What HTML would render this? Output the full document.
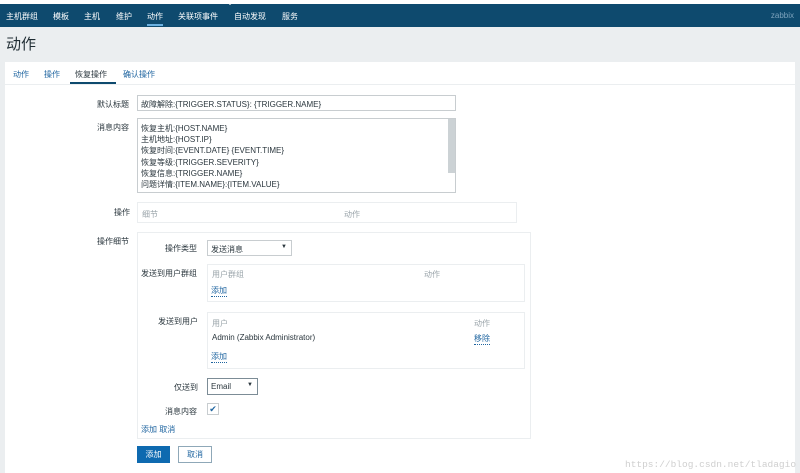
<!DOCTYPE html>
<html><head><meta charset="utf-8"><style>
*{margin:0;padding:0;box-sizing:border-box}
body{width:800px;height:473px;overflow:hidden;background:#ebeef0;font-family:"Liberation Sans","Noto Sans CJK SC",sans-serif;font-size:8px;color:#2a363d;position:relative}
.a{position:absolute}
.nav{left:0;top:4px;width:800px;height:23px;background:#0e4a6e}
.nav span{position:absolute;top:7px;color:#fff;font-size:8px}
.lnk{color:#1f65a0}
.inp{border:1px solid #c8cdd0;background:#fff}
.gl{color:#9aa4aa}
.box{border:1px solid #ebeef0;background:#fff}
</style></head><body>
<div class="a" style="left:0;top:0;width:800px;height:4px;background:#fff"></div>
<div class="a" style="left:224px;top:0;width:0;height:0;border-left:6px solid transparent;border-right:6px solid transparent;border-top:5px solid #fff;z-index:2"></div>
<div class="a nav">
<span style="left:6px">主机群组</span><span style="left:53px">模板</span><span style="left:84px">主机</span><span style="left:116px">维护</span><span style="left:147px">动作</span><span style="left:178px">关联项事件</span><span style="left:234px">自动发现</span><span style="left:282px">服务</span>
<span style="right:6px;color:#7da3bd">zabbix</span>
<div class="a" style="left:147px;top:20px;width:16px;height:2px;background:#6ab0e0"></div>
</div>
<div class="a" style="left:6px;top:33px;font-size:15px;color:#1f2c33">动作</div>
<div class="a" style="left:5px;top:62px;width:790px;height:411px;background:#fff"></div>
<div class="a" style="left:5px;top:84px;width:790px;height:1px;background:#ebeef0"></div>
<div class="a lnk" style="left:13px;top:69px">动作</div>
<div class="a lnk" style="left:44px;top:69px">操作</div>
<div class="a" style="left:75px;top:69px">恢复操作</div>
<div class="a" style="left:70px;top:82px;width:46px;height:2px;background:#0e4a6e"></div>
<div class="a lnk" style="left:123px;top:69px">确认操作</div>

<div class="a" style="left:97px;top:99px">默认标题</div>
<div class="a inp" style="left:137px;top:95px;width:319px;height:16px;padding:3px 3px">故障解除:{TRIGGER.STATUS}: {TRIGGER.NAME}</div>
<div class="a" style="left:97px;top:122px">消息内容</div>
<div class="a inp" style="left:137px;top:118px;width:319px;height:75px;padding:4px 3px;line-height:11.2px">恢复主机:{HOST.NAME}<br>主机地址:{HOST.IP}<br>恢复时间:{EVENT.DATE} {EVENT.TIME}<br>恢复等级:{TRIGGER.SEVERITY}<br>恢复信息:{TRIGGER.NAME}<br>问题详情:{ITEM.NAME}:{ITEM.VALUE}</div>
<div class="a" style="left:448px;top:119px;width:7px;height:54px;background:#ccd2d5"></div>

<div class="a" style="left:114px;top:207px">操作</div>
<div class="a box" style="left:137px;top:202px;width:380px;height:21px"></div>
<div class="a gl" style="left:142px;top:209px">细节</div>
<div class="a gl" style="left:344px;top:209px">动作</div>

<div class="a" style="left:97px;top:236px">操作细节</div>
<div class="a box" style="left:137px;top:232px;width:394px;height:207px"></div>
<div class="a" style="left:165px;top:243px">操作类型</div>
<div class="a inp" style="left:207px;top:240px;width:85px;height:16px;padding:3px 3px">发送消息<span style="position:absolute;right:4px;top:3px;font-size:6px">▼</span></div>
<div class="a" style="left:141px;top:268px">发送到用户群组</div>
<div class="a box" style="left:207px;top:264px;width:318px;height:38px"></div>
<div class="a gl" style="left:212px;top:269px">用户群组</div>
<div class="a gl" style="left:424px;top:269px">动作</div>
<div class="a lnk" style="left:211px;top:285px;border-bottom:1px dotted #1f65a0">添加</div>
<div class="a" style="left:158px;top:316px">发送到用户</div>
<div class="a box" style="left:207px;top:312px;width:318px;height:57px"></div>
<div class="a gl" style="left:212px;top:318px">用户</div>
<div class="a gl" style="left:474px;top:318px">动作</div>
<div class="a" style="left:212px;top:333px">Admin (Zabbix Administrator)</div>
<div class="a lnk" style="left:474px;top:333px;border-bottom:1px dotted #1f65a0">移除</div>
<div class="a lnk" style="left:211px;top:351px;border-bottom:1px dotted #1f65a0">添加</div>
<div class="a" style="left:174px;top:382px">仅送到</div>
<div class="a inp" style="left:207px;top:378px;width:51px;height:17px;padding:3px 3px;border-color:#7c8c96">Email<span style="position:absolute;right:4px;top:3px;font-size:6px">▼</span></div>
<div class="a" style="left:165px;top:406px">消息内容</div>
<div class="a inp" style="left:207px;top:403px;width:12px;height:12px;color:#1f65a0;font-size:9px;line-height:10px;text-align:center">✔</div>
<div class="a lnk" style="left:141px;top:424px">添加 取消</div>

<div class="a" style="left:137px;top:446px;width:33px;height:17px;background:#0e6ab0;color:#fff;text-align:center;line-height:17px">添加</div>
<div class="a" style="left:178px;top:446px;width:34px;height:17px;border:1px solid #8fa8b8;color:#1f65a0;text-align:center;line-height:15px">取消</div>
<div class="a" style="left:625px;top:459px;font-family:'Liberation Mono',monospace;font-size:9.5px;color:#cfcfcf">https://blog.csdn.net/tladagio</div>
</body></html>
